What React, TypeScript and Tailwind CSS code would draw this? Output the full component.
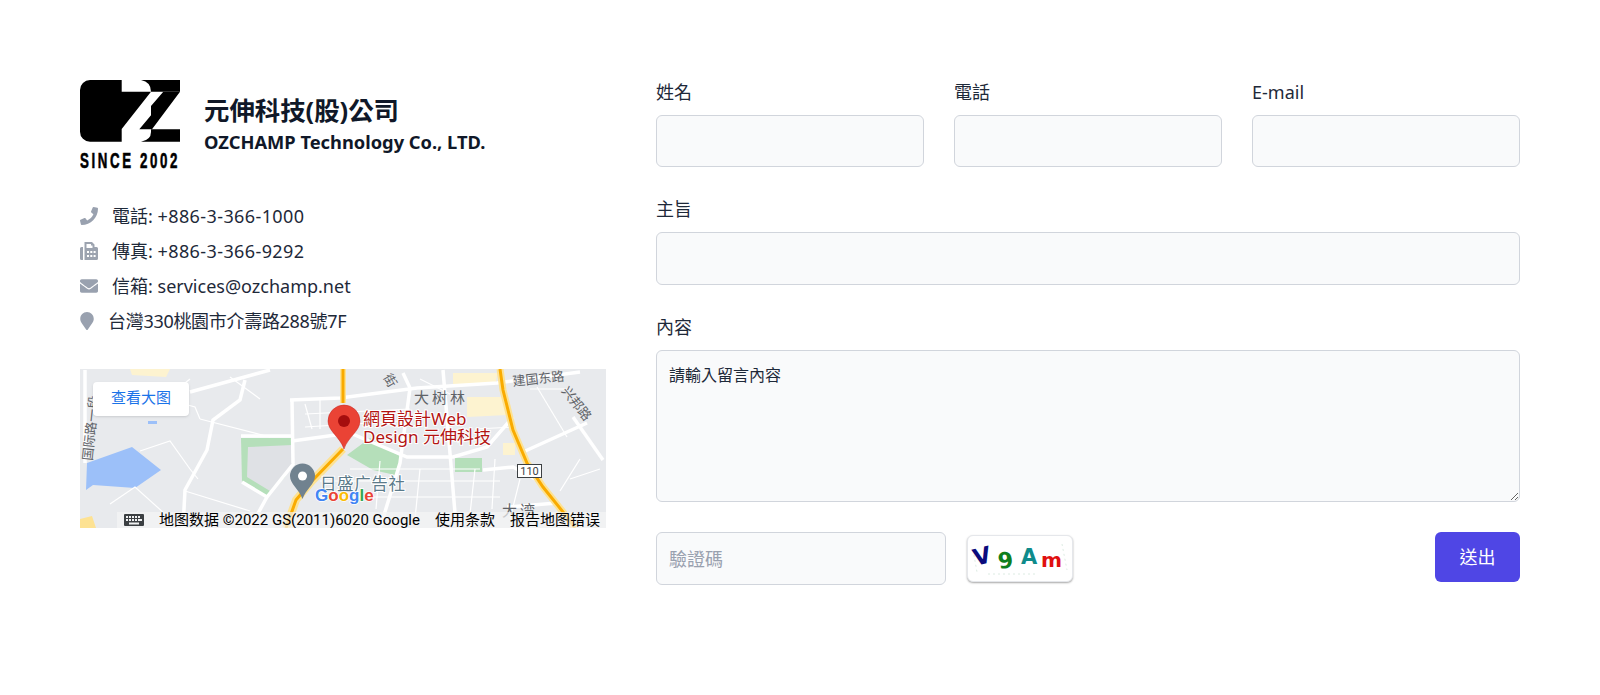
import { FaEnvelope, FaMapMarker, FaPhone } from 'react-icons/fa'

const font = "font-['Noto_Sans','Noto_Sans_CJK_TC',sans-serif]"
const mapFont = "Roboto, 'Noto Sans CJK SC', sans-serif"

const inputClass = 'block w-full rounded-md border border-gray-300 bg-gray-50 px-3 outline-none placeholder:text-gray-400'

function Logo() {
  return (
    <svg width="100" height="92" viewBox="0 0 100 92" className="shrink-0">
      <path d="M10 0H41.7V11.7H71L41.7 49V61.7H10A10 10 0 0 1 0 51.7V10A10 10 0 0 1 10 0Z" fill="#000" />
      <path d="M61 0H100V11.7H71Q71 2 61 0Z" fill="#000" />
      <path d="M83.3 11.7H100L72 49.3H59.3L71 35.3V26Z" fill="#000" />
      <path d="M71 49.3H100V61.7H61Q71 60 71 52Z" fill="#000" />
      <text
        x="0"
        y="88"
        fontFamily="'Liberation Sans', sans-serif"
        fontWeight="700"
        fontSize="22"
        letterSpacing="4.3"
        textLength="100"
        lengthAdjust="spacingAndGlyphs"
        stroke="#000"
        strokeWidth="0.6"
        fill="#000"
      >
        SINCE 2002
      </text>
    </svg>
  )
}

function FaxIcon() {
  return (
    <svg width="18" height="18" viewBox="0 0 18 18" className="shrink-0 mr-3.5" fill="#9ca3af">
      <path d="M0 6.5A1.5 1.5 0 0 1 1.5 5H3V18H1.5A1.5 1.5 0 0 1 0 16.5Z" />
      <path
        fillRule="evenodd"
        d="M4.5 0H12L14.5 2.5V5H16.5A1.5 1.5 0 0 1 18 6.5V16.5A1.5 1.5 0 0 1 16.5 18H4.5ZM6.5 2V6H12.5V3.5H11V2ZM7 9V11H9V9ZM10.3 9V11H12.3V9ZM13.6 9V11H15.6V9ZM7 13V15H9V13ZM10.3 13V15H12.3V13ZM13.6 13V15H15.6V13Z"
      />
    </svg>
  )
}

function MapPicture() {
  const roads = [
    'M5 1V94',
    'M110 23L190 1',
    'M165 11L160 31L133 51L127 81L105 121L103 159',
    'M210 31L260 29L337 19L417 14L500 3',
    'M212 31L213 94',
    'M212 72L270 64L327 88L373 88L407 78L433 48',
    'M323 4L330 19L320 94L300 159',
    'M363 1L375 144',
    'M443 83L507 54',
    'M403 101L433 98L457 111',
    'M427 138L477 134',
    'M493 48L523 91',
    'M161 67L214 67',
    'M162 113L187 128L214 94',
    'M187 128L170 159',
  ]
  const minor = [
    'M78 28L115 38L120 50',
    'M60 82L90 72L110 100L118 110',
    'M120 50L190 68',
    'M150 8L180 30',
    'M225 45L330 40',
    'M225 58L320 52',
    'M240 30V60',
    'M270 100H400',
    'M240 112H420',
    'M240 128H420',
    'M340 100L335 150',
    'M395 100L390 145',
    'M415 90L412 140',
    'M30 135L55 118L85 145',
    'M457 18L487 68',
    'M395 60L435 58',
    'M105 122L170 142',
    'M450 20H490',
    'M500 90L480 122',
    'M490 110L520 100',
    'M85 30L110 10',
    'M340 10L380 30',
    'M440 110L430 150',
    'M300 92L296 140',
    'M225 35L232 60',
  ]
  const highway = 'M420 0L423 21L433 61L447 94L463 118L487 148L495 159'
  const ramp = 'M263 80L232 112L216 131L206 159'

  return (
    <svg width="526" height="159" viewBox="0 0 526 159" className="block">
      <rect width="526" height="159" fill="#e8eaed" />
      <path d="M373 4H417L416 14L373 18Z" fill="#fdf3d0" />
      <path d="M387 28H427V46L387 48Z" fill="#fdf3d0" />
      <path d="M50 0H90L86 8L52 6Z" fill="#fdf3d0" />
      <path d="M423 74H435V86H423Z" fill="#fdf3d0" />
      <path d="M0 150L12 147L16 159H0Z" fill="#fde293" />
      <path d="M7 94L52 78L81 101L55 119L13 116L6 121Z" fill="#9cc0f9" />
      <path d="M68 52H77V55H68Z" fill="#9cc0f9" />
      <path d="M161 69H212V85L205 108L187 128L162 113Z" fill="#b5dfba" />
      <path d="M168 78L212 76V96L190 122L167 108Z" fill="#dfe1e5" />
      <path d="M267 86L290 69L303 78L322 88L315 106L293 101Z" fill="#b5dfba" />
      <path d="M375 89H402V103H375Z" fill="#b5dfba" />
      {roads.map((d) => (
        <path key={d} d={d} stroke="#fff" strokeWidth="3.5" fill="none" />
      ))}
      {minor.map((d) => (
        <path key={d} d={d} stroke="#fff" strokeWidth="1.2" fill="none" />
      ))}
      <path d={highway} stroke="#fde293" strokeWidth="7" fill="none" />
      <path d={highway} stroke="#f9ab00" strokeWidth="3" fill="none" />
      <path d="M263 0V34" stroke="#fde293" strokeWidth="6" fill="none" />
      <path d="M263 0V34" stroke="#f9ab00" strokeWidth="3" fill="none" />
      <path d={ramp} stroke="#fde293" strokeWidth="8" fill="none" />
      <path d={ramp} stroke="#f9ab00" strokeWidth="3" fill="none" />
      <rect x="437.5" y="95.5" width="24" height="13" fill="#fff" stroke="#3c4043" />
      <text x="449.5" y="106" textAnchor="middle" fontFamily={mapFont} fontSize="11" fill="#3c4043">110</text>
      <g fontFamily={mapFont} fill="#5f6368" fontSize="13">
        <text x="433" y="17" transform="rotate(-6 433 17)">建国东路</text>
        <text x="481" y="22" transform="rotate(52 481 22)">兴邦路</text>
        <text x="12" y="92" transform="rotate(-84 12 92)">国际路一段</text>
        <text x="303" y="8" transform="rotate(60 303 8)">街</text>
      </g>
      <text x="334" y="34" fontFamily={mapFont} fontSize="15" letterSpacing="3" fill="#5f6368">大树林</text>
      <text x="422" y="147" fontFamily={mapFont} fontSize="15" letterSpacing="3" fill="#5f6368">大湾</text>
      <g fontFamily="'Noto Sans', 'Noto Sans CJK TC', sans-serif" fontSize="17" fill="#b31412" stroke="#fff" strokeWidth="2" paintOrder="stroke">
        <text x="283" y="56">網頁設計Web</text>
        <text x="283" y="74">Design 元伸科技</text>
      </g>
      <text x="240" y="121" fontFamily={mapFont} fontSize="16.5" fill="#5b7a8a" stroke="#fff" strokeWidth="2" paintOrder="stroke" letterSpacing="0.6">日盛广告社</text>
      <path d="M248 52A16 16 0 0 1 280 52C280 62 268 68 264 80C260 68 248 62 248 52Z" fill="#ea4335" stroke="#c5221f" strokeWidth="0.5" />
      <circle cx="264" cy="52" r="6" fill="#a50e0e" />
      <path d="M210 107A12.5 12.5 0 0 1 235 107C235 115 226 120 222.5 130C219 120 210 115 210 107Z" fill="#70828f" />
      <circle cx="222.5" cy="107" r="4.5" fill="#fff" />
      <g fontFamily="'Liberation Sans', sans-serif" fontSize="17" fontWeight="700" stroke="#fff" strokeWidth="1.5" paintOrder="stroke">
        <text x="235" y="132">
          <tspan fill="#4285f4">G</tspan>
          <tspan fill="#ea4335">o</tspan>
          <tspan fill="#fbbc05">o</tspan>
          <tspan fill="#4285f4">g</tspan>
          <tspan fill="#34a853">l</tspan>
          <tspan fill="#ea4335">e</tspan>
        </text>
      </g>
    </svg>
  )
}

export default function App() {
  return (
    <div className={`${font} flex h-[695px] gap-[50px] bg-white pt-20 pl-20 pr-20 text-lg text-gray-800`}>
      {/* Left column */}
      <div className="w-[526px] shrink-0">
        <div className="flex items-start gap-6">
          <Logo />
          <div className="pt-[13px] font-bold text-gray-900">
            <div className="text-[25.4px] leading-[34px]">元伸科技(股)公司</div>
            <div className="text-[18.3px] leading-[30px]">OZCHAMP Technology Co., LTD.</div>
          </div>
        </div>

        <ul className="mt-[30px] flex flex-col gap-[7px] leading-[28px]">
          <li className="flex items-center">
            <FaPhone size={18} className="shrink-0 mr-3.5 text-gray-400" />
            <span>電話: <span className="tracking-[0.4px]">+886-3-366-1000</span></span>
          </li>
          <li className="flex items-center">
            <FaxIcon />
            <span>傳真: <span className="tracking-[0.4px]">+886-3-366-9292</span></span>
          </li>
          <li className="flex items-center">
            <FaEnvelope size={18} className="shrink-0 mr-3.5 text-gray-400" />
            信箱: services@ozchamp.net
          </li>
          <li className="flex items-center">
            <FaMapMarker size={18} className="shrink-0 w-3.5 mr-3.5 text-gray-400" />
            <span className="tracking-[-0.3px]">台灣330桃園市介壽路288號7F</span>
          </li>
        </ul>

        <div className="relative mt-[34px] h-[159px] overflow-hidden">
          <MapPicture />
          <div className="absolute left-[13px] top-[13px] flex h-[34px] w-[96px] items-center justify-center rounded-sm bg-white text-[15px] text-[#1a73e8] shadow-sm font-['Roboto','Noto_Sans_CJK_SC',sans-serif]">
            查看大图
          </div>
          <div className="absolute bottom-0 left-[37px] right-0 flex h-4 items-center whitespace-nowrap bg-[#f5f5f5]/70 text-[15px] leading-4 text-black font-['Roboto','Noto_Sans_CJK_SC',sans-serif]">
            <svg width="20" height="12" viewBox="0 0 20 12" className="ml-[7px] shrink-0" fill="#3c4043">
              <path
                fillRule="evenodd"
                d="M1 0H19A1 1 0 0 1 20 1V11A1 1 0 0 1 19 12H1A1 1 0 0 1 0 11V1A1 1 0 0 1 1 0ZM2 2V4H4V2ZM5 2V4H7V2ZM8 2V4H10V2ZM11 2V4H13V2ZM14 2V4H16V2ZM2 5V7H4V5ZM5 5V7H7V5ZM8 5V7H10V5ZM11 5V7H13V5ZM14 5V7H18V5ZM5 8.5V10.5H15V8.5Z"
              />
            </svg>
            <span className="ml-[15px]">地图数据 ©2022 GS(2011)6020 Google</span>
            <span className="ml-[15px]">使用条款</span>
            <span className="ml-[15px]">报告地图错误</span>
          </div>
        </div>
      </div>

      {/* Form */}
      <form className="flex-1">
        <div className="grid grid-cols-3 gap-[30px]">
          <div>
            <label className="mb-[11px] block leading-6">姓名</label>
            <input className={`${inputClass} h-[52px]`} />
          </div>
          <div>
            <label className="mb-[11px] block leading-6">電話</label>
            <input className={`${inputClass} h-[52px]`} />
          </div>
          <div>
            <label className="mb-[11px] block leading-6">E-mail</label>
            <input className={`${inputClass} h-[52px]`} />
          </div>
        </div>

        <div className="mt-[30px]">
          <label className="mb-[11px] block leading-6">主旨</label>
          <input className={`${inputClass} h-[53px]`} />
        </div>

        <div className="mt-[30px]">
          <label className="mb-[11px] block leading-6">內容</label>
          <textarea
            className="block h-[152px] w-full rounded-md border border-gray-300 bg-gray-50 px-3 py-3 text-base text-gray-800 outline-none"
            defaultValue="請輸入留言內容"
          />
        </div>

        <div className="mt-[30px] flex items-start">
          <input className={`${inputClass} h-[53px] !w-[290px]`} placeholder="驗證碼" />
          <div className="ml-[21px] mt-[3px] h-[47px] w-[106px] overflow-hidden rounded-md border border-gray-200 bg-white shadow-[0_1px_2px_rgba(0,0,0,0.35)]">
            <svg width="104" height="45" viewBox="0 0 104 45" fontFamily="'DejaVu Sans', sans-serif" fontWeight="700">
              <path d="M5 14L9 36M94 8L99 34M20 38H70" stroke="#dcebe2" strokeWidth="1" strokeDasharray="2 3" fill="none" />
              <text x="5" y="28" fontSize="23" fill="#0b0b7c" transform="rotate(-14 14 20)">V</text>
              <text x="30" y="32" fontSize="22" fill="#0f7f1d" transform="rotate(-8 37 25)">9</text>
              <text x="53" y="28" fontSize="21" fill="#0f8b8b">A</text>
              <text x="73" y="31" fontSize="20" fill="#e01010" textLength="21" lengthAdjust="spacingAndGlyphs">m</text>
            </svg>
          </div>
          <button type="button" className="ml-auto h-[50px] w-[85px] rounded-md bg-[#4f46e5] text-white">
            送出
          </button>
        </div>
      </form>
    </div>
  )
}
